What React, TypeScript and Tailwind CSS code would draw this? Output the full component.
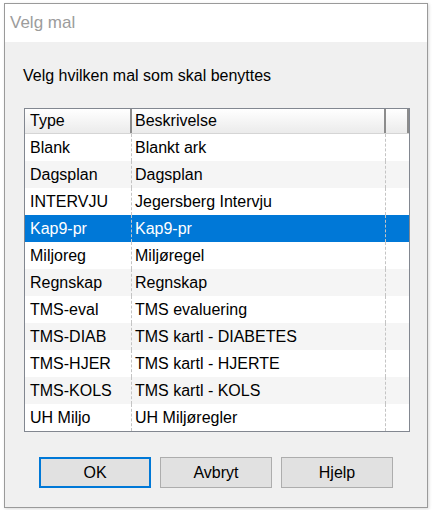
import React from "react";

const rows: [string, string][] = [
  ["Blank", "Blankt ark"],
  ["Dagsplan", "Dagsplan"],
  ["INTERVJU", "Jegersberg Intervju"],
  ["Kap9-pr", "Kap9-pr"],
  ["Miljoreg", "Miljøregel"],
  ["Regnskap", "Regnskap"],
  ["TMS-eval", "TMS evaluering"],
  ["TMS-DIAB", "TMS kartl - DIABETES"],
  ["TMS-HJER", "TMS kartl - HJERTE"],
  ["TMS-KOLS", "TMS kartl - KOLS"],
  ["UH Miljo", "UH Miljøregler"],
];

export default function App() {
  return (
    <div
      className="w-[433px] h-[510px] bg-white overflow-hidden pt-[3px] pl-[4px]"
      style={{ fontFamily: '"Liberation Sans", Arial, sans-serif' }}
    >
      <div className="w-[424px] h-[505px] border border-[#9a9a9a] bg-[#f0f0f0] flex flex-col shadow-[1px_1px_3px_rgba(0,0,0,0.15)]">
        {/* Title bar */}
        <div className="h-[38px] bg-white flex items-center pl-[5px] text-[17px] text-[#9c9c9c] shrink-0">
          Velg mal
        </div>
        {/* Content */}
        <div className="flex flex-col pl-[19px]">
          <div className="mt-[24px] ml-[-1px] text-[16px] leading-[19px] text-black">
            Velg hvilken mal som skal benyttes
          </div>
          <div className="mt-[23px] w-[386px] border border-[#828790] bg-white flex flex-col text-[16px] text-black">
            {/* Header */}
            <div className="h-[25px] flex bg-gradient-to-b from-white to-[#ebebeb] border-b border-[#d5d5d5]">
              <div className="w-[107px] border-r-2 border-[#8c8c8c] pl-[5px] flex items-center">
                Type
              </div>
              <div className="w-[254px] border-r-2 border-[#8c8c8c] pl-[3px] flex items-center">
                Beskrivelse
              </div>
              <div className="flex-1 border-r-2 border-[#8c8c8c]" />
            </div>
            {rows.map(([t, d], i) => {
              const sel = i === 3;
              const bg = sel
                ? "bg-[#0078d7] text-white"
                : i % 2 === 1
                ? "bg-[#f5f5f5]"
                : "bg-white";
              return (
                <div key={t} className={`h-[27px] flex ${bg}`}>
                  <div className="w-[106px] pl-[5px] flex items-center whitespace-nowrap">
                    {t}
                  </div>
                  <div className="w-[254px] border-l border-dashed border-[#c4c4c4] pl-[3px] flex items-center whitespace-nowrap">
                    {d}
                  </div>
                  <div className="flex-1 border-l border-dashed border-[#c4c4c4]" />
                </div>
              );
            })}
          </div>
          <div className="mt-[25px] ml-[15px] flex gap-[9px]">
            <button className="w-[112px] h-[31px] bg-[#e1e1e1] border-2 border-[#0078d7] text-[16px] text-black flex items-center justify-center">
              OK
            </button>
            <button className="w-[112px] h-[31px] bg-[#e1e1e1] border border-[#adadad] text-[16px] text-black flex items-center justify-center">
              Avbryt
            </button>
            <button className="w-[112px] h-[31px] bg-[#e1e1e1] border border-[#adadad] text-[16px] text-black flex items-center justify-center">
              Hjelp
            </button>
          </div>
        </div>
      </div>
    </div>
  );
}
